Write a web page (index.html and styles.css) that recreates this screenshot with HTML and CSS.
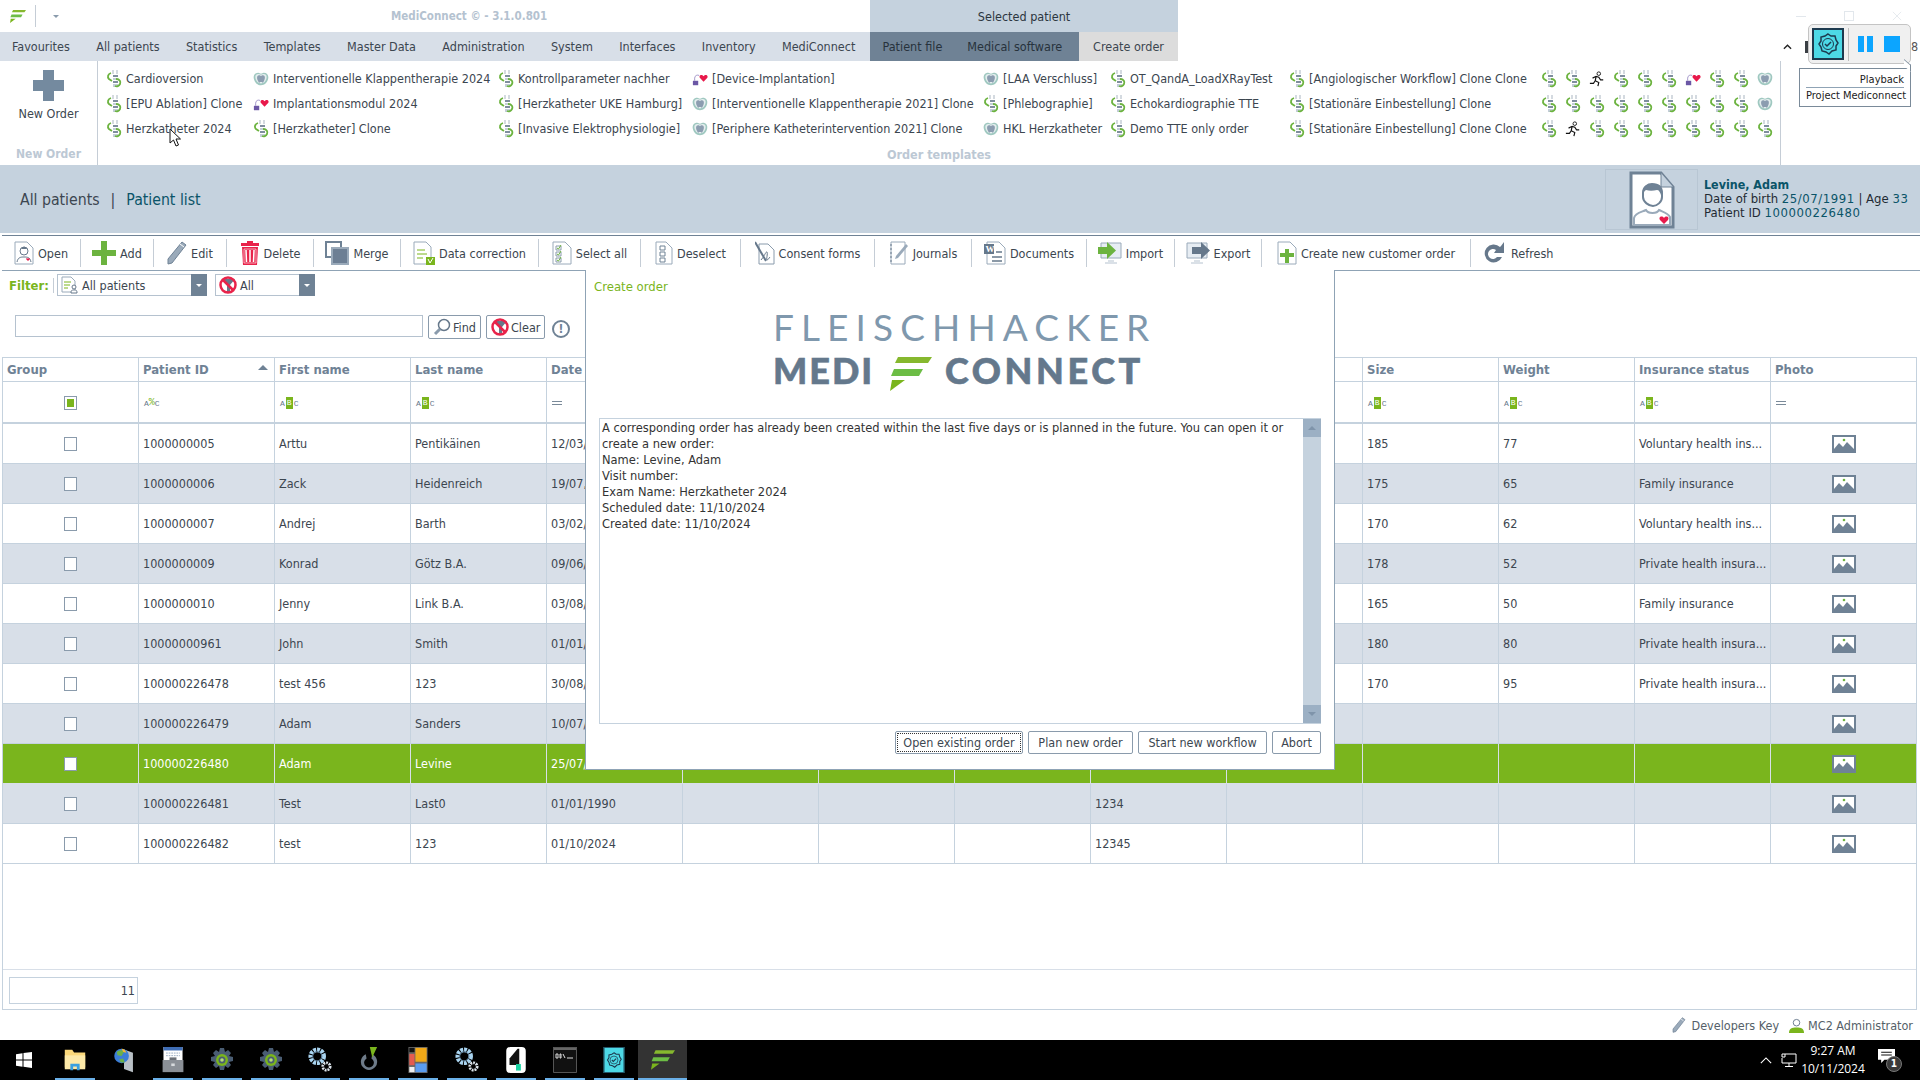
FILE: index.html
```html
<!DOCTYPE html>
<html lang="en">
<head>
<meta charset="utf-8">
<title>MediConnect</title>
<link rel="stylesheet" href="styles.css">
</head>
<body>
<svg class="sprite" xmlns="http://www.w3.org/2000/svg">
  <symbol id="flogo" viewBox="0 0 42 34"><path d="M8 0h34l-4 6H5z" fill="#86b82e"/><path d="M4 12h29l-4 7H1z" fill="#6cbd45"/><path d="M2 23h13L0 34z" fill="#7ab51d"/></symbol>
  <symbol id="dna" viewBox="0 0 16 18"><path d="M7 0v4M11 0v4" stroke="#a9b5c1" fill="none"/><path d="M7 5h5v2H7zM7 11h5v2H7z" fill="#7f8e9e"/><path d="M7 8h5v2H7zM7 14h5v3H7z" fill="#c3cdd8"/><path d="M5 3C2 4 1 7 3 9l3 2" stroke="#6cb33f" stroke-width="1.8" fill="none"/><path d="M10 9c4 0 5 3 4 5-1 2-3 3-5 2" stroke="#6cb33f" stroke-width="1.8" fill="none"/></symbol>
  <symbol id="lung" viewBox="0 0 18 16"><path d="M6 1C2 1 0 4 1 8s4 7 8 7 7-3 8-7-1-7-5-7c-1 0-2 1-3 1S7 1 6 1z" fill="#9fc8c0"/><path d="M5.500 2.500C3 3 2 5 3 8s3 5 6 5 5-2 6-5-0-5-2.500-5.500C11 2.500 10 3 9 3s-2-.5-3.500-.5z" fill="#e4eeee"/><path d="M6 4c2-.5 2 .5 3 .5S10 3.500 12 4s1.500 4 .5 6-1.500 3-2.500 1.500H8C7 13 6.500 12 5.500 10S4 4.500 6 4z" fill="#8c9db0"/></symbol>
  <symbol id="device" viewBox="0 0 18 16"><path d="M1 10h6v5H1z" fill="#6b57a5"/><path d="M3 10V7c0-3 3-4 5-3" stroke="#9a8cc4" fill="none"/><path d="M13 11L9 7c-2-3 2-5 4-2 2-3 6-1 4 2z" fill="#e8194b"/></symbol>
  <symbol id="run" viewBox="0 0 18 18"><circle cx="11" cy="3" r="2" fill="#fff" stroke="#111"/><path d="M4 8l4-2 3 1 2 3 3 0M8 6L7 11l4 2-1 4M7 11l-2 3-4 0" fill="none" stroke="#111" stroke-width="1.3"/></symbol>
  <symbol id="i-open" viewBox="0 0 20 24"><path d="M1 1h12l6 6v16H1z" fill="#fff" stroke="#9aaaba"/><circle cx="10" cy="10" r="4" fill="#fff" stroke="#66788b"/><path d="M7 8c2-3 5-3 6 0z" fill="#66788b"/><path d="M3 21c1-5 4-5 7-5s6 0 7 5" fill="none" stroke="#66788b"/><path d="M14 20l-2-2c0-1 2-1 2 0 0-1 2-1 2 0z" fill="#e8194b"/></symbol>
  <symbol id="i-add" viewBox="0 0 24 24"><path d="M9 0h6v9h9v6h-9v9H9v-9H0V9h9z" fill="#6cb33f"/></symbol>
  <symbol id="i-edit" viewBox="0 0 20 24"><path d="M15 1l4 3L5 22l-4 1 0-5z" fill="#9aaaba" stroke="#6f8295"/><path d="M13 3l4 3" stroke="#fff"/></symbol>
  <symbol id="i-del" viewBox="0 0 20 24"><path d="M7 0h6v2h6v3H1V2h6z" fill="#e8234a"/><path d="M2 6h16l-1 18H3z" fill="#e8234a"/><path d="M6 9l.5 12M10 9v12M14 9l-.5 12" stroke="#fff" stroke-width="1.5"/><path d="M4 8h12v14H4z" fill="none" stroke="#fff" stroke-width=".6"/></symbol>
  <symbol id="i-merge" viewBox="0 0 24 24"><path d="M1 1h15v15H1z" fill="#fff" stroke="#6f8295" stroke-width="2"/><path d="M7 7h16v16H7z" fill="#fff" stroke="#9aaaba" stroke-width="2"/><path d="M8 8h14v14H8z" fill="#5d7188" opacity=".9"/></symbol>
  <symbol id="i-data" viewBox="0 0 22 24"><path d="M1 1h12l5 5v17H1z" fill="#fff" stroke="#9aaaba"/><path d="M4 9h8M4 13h10M4 17h6" stroke="#7ab51d"/><path d="M13 16h9v8h-9z" fill="#7ab51d"/><path d="M15 18l2 4 3-5" stroke="#fff" fill="none"/></symbol>
  <symbol id="i-selall" viewBox="0 0 20 24"><path d="M1 1h12l6 6v16H1z" fill="#fff" stroke="#9aaaba"/><path d="M4 5h5v4H4zM4 11h5v4H4zM4 17h5v4H4z" fill="#fff" stroke="#8a9bac"/><path d="M5 7l1.500 1L9 4M5 13l1.500 1L9 10M5 19l1.500 1L9 16" stroke="#6cb33f" fill="none"/></symbol>
  <symbol id="i-desel" viewBox="0 0 18 24"><path d="M1 1h10l6 6v16H1z" fill="#fff" stroke="#9aaaba"/><path d="M5 5h5v4H5zM5 11h5v4H5zM5 17h5v4H5z" fill="#fff" stroke="#6f8295"/></symbol>
  <symbol id="i-cons" viewBox="0 0 20 24"><path d="M4 3h9l6 6v14H4z" fill="#fff" stroke="#8a9bac"/><path d="M0 1l11 19" stroke="#66788b" stroke-width="2"/><path d="M6 19c3-3 5-9 6-8s-1 8 0 8 2-2 3-3" fill="none" stroke="#66788b"/></symbol>
  <symbol id="i-jour" viewBox="0 0 20 24"><path d="M2 1h14v22H2z" fill="#fff" stroke="#9aaaba"/><path d="M1 4h2M1 8h2M1 12h2M1 16h2M1 20h2" stroke="#66788b"/><path d="M17 3l2 2-10 12-3 1 1-3z" fill="#9aaaba"/></symbol>
  <symbol id="i-docs" viewBox="0 0 22 24"><path d="M3 1h12l6 6v16H3z" fill="#fff" stroke="#9aaaba"/><path d="M0 3h10v10H0z" fill="#66788b"/><text x="1.500" y="11" class="w-glyph">W</text><path d="M12 11h6M8 16h10M8 20h10" stroke="#66788b" stroke-width="1.500"/></symbol>
  <symbol id="i-imp" viewBox="0 0 24 24"><path d="M3 2h20v15H3z" fill="#e7edf3" stroke="#9aaaba"/><path d="M10 20h6M7 22h12" stroke="#b5c2cf"/><path d="M0 6h9V1l9 8.500L9 18v-5H0z" fill="#6cb33f"/></symbol>
  <symbol id="i-exp" viewBox="0 0 24 24"><path d="M1 2h20v15H1z" fill="#e7edf3" stroke="#9aaaba"/><path d="M8 20h6M5 22h12" stroke="#b5c2cf"/><path d="M6 6h9V1l9 8.500L15 18v-5H6z" fill="#66788b"/></symbol>
  <symbol id="i-new" viewBox="0 0 20 24"><path d="M1 1h12l6 6v16H1z" fill="#fff" stroke="#9aaaba"/><path d="M8 8h4v4h5v4h-5v6H8v-6H3v-4h5z" fill="#6cb33f"/></symbol>
  <symbol id="i-ref" viewBox="0 0 24 24"><path d="M17 6a9 9 0 1 0 2 10h-5a5 5 0 1 1-1-7l-2 3h10V1l-3 4z" fill="#66788b"/></symbol>
  <symbol id="i-nofilter" viewBox="0 0 18 18"><path d="M3 3l13 0-5 6v6l-3 2V9z" fill="#66788b"/><circle cx="9" cy="9" r="7.500" fill="none" stroke="#e8234a" stroke-width="2.500"/><path d="M4 4l10 10" stroke="#e8234a" stroke-width="2.500"/></symbol>
  <symbol id="i-allp" viewBox="0 0 18 18"><path d="M1 1h9l4 4v11H1z" fill="#fff" stroke="#9aaaba"/><path d="M3 6h7M3 9h6M3 12h4" stroke="#7ab51d"/><circle cx="13" cy="11" r="2" fill="#fff" stroke="#66788b"/><path d="M10 17c0-3 1-3 3-3s3 0 3 3z" fill="#fff" stroke="#66788b"/></symbol>
  <symbol id="i-find" viewBox="0 0 18 18"><circle cx="11" cy="7" r="5.500" fill="#fff" stroke="#66788b" stroke-width="1.500"/><path d="M7 11l-5 5" stroke="#8a9bac" stroke-width="3"/></symbol>
  <symbol id="i-photo" viewBox="0 0 24 18"><path d="M0 0h24v18H0z" fill="#6f8295"/><path d="M2 2h20v12H2z" fill="#fff"/><path d="M2 14l5-6 4 4 4-5 7 7z" fill="#6f8295"/><circle cx="12" cy="5" r="1.300" fill="#6cb33f"/></symbol>
  <symbol id="gear" viewBox="0 0 24 24"><path d="M10 0h4l1 4 3-2 3 3-2 3 4 1v4l-4 1 2 3-3 3-3-2-1 4h-4l-1-4-3 2-3-3 2-3-4-1V9l4-1-2-3 3-3 3 2z" fill="#4a5d73"/><circle cx="12" cy="12" r="6" fill="#7ab51d"/><circle cx="12" cy="12" r="3.500" fill="#4a5d73"/><circle cx="12" cy="12" r="1.800" fill="#b8dc7a"/></symbol>
  <symbol id="gears" viewBox="0 0 26 28"><circle cx="10" cy="10" r="7" fill="none" stroke="#a9d4f0" stroke-width="5" stroke-dasharray="3 1"/><circle cx="10" cy="10" r="5" fill="none" stroke="#4b6a84" stroke-width="1"/><circle cx="20" cy="21" r="4" fill="none" stroke="#dfe7ee" stroke-width="3" stroke-dasharray="2 1"/></symbol>
  <symbol id="badge" viewBox="0 0 24 24"><path d="M12 2l3 2 4 0 1 4 2 3-2 3 0 4-4 1-3 3-3-2-4-1-1-4-2-3 2-3 0-4 4-1z" fill="none" stroke="currentColor" stroke-width="1.500"/><circle cx="12" cy="12" r="5.500" fill="none" stroke="currentColor"/><path d="M9 12l2 2 4-4" fill="none" stroke="currentColor" stroke-width="1.500"/></symbol>
  <symbol id="patient" viewBox="0 0 46 58"><path d="M2 2h30l12 14v40H2z" fill="#fff" stroke="#6f8295" stroke-width="3"/><path d="M32 2v14h12" fill="#c5d2de" stroke="#6f8295"/><path d="M14 22c0-6 5-9 9-9 6 0 10 3 10 9v4c0 5-5 9-9 9s-10-4-10-9z" fill="#fff" stroke="#6f8295" stroke-width="2"/><path d="M14 24c-2-8 4-11 9-11 7 0 11 4 9 11-1-3-2-5-4-5-4 1-8 1-11 0-2 1-3 3-3 5z" fill="#6f8295"/><path d="M5 54v-7c1-5 8-6 12-8 2 4 11 4 13 0 4 2 9 3 11 7v8z" fill="#fff" stroke="#9aaaba" stroke-width="2"/><path d="M35 53l-4-4c-2-3 2-5 4-2 2-3 6-1 4 2z" fill="#e8194b"/></symbol>
</svg>

<header class="titlebar">
  <div class="title-left">
    <svg class="app-logo"><use href="#flogo"/></svg>
    <span class="tb-sep"></span>
    <span class="tb-caret"></span>
    <span class="app-title">MediConnect © - 3.1.0.801</span>
  </div>
  <div class="selected-tab">Selected patient</div>
  <div class="win-ctrls">
    <span class="win-min"></span>
    <span class="win-max"></span>
    <svg class="win-close" viewBox="0 0 12 12"><path d="M1 1l10 10M11 1L1 11"/></svg>
  </div>
</header>

<nav class="menubar">
  <div class="menu-main">
    <span class="tab">Favourites</span><span class="tab">All patients</span><span class="tab">Statistics</span><span class="tab">Templates</span><span class="tab">Master Data</span><span class="tab">Administration</span><span class="tab">System</span><span class="tab">Interfaces</span><span class="tab">Inventory</span><span class="tab">MediConnect</span>
  </div>
  <div class="menu-ctx"><span class="tab">Patient file</span><span class="tab">Medical software</span></div>
  <div class="menu-order">Create order</div>
  <div class="menu-tail">
    <svg class="chev" viewBox="0 0 10 7"><path d="M1 6l4-4 4 4"/></svg>
    <i class="tail-ico"></i>
    <span class="tail-end">8</span>
  </div>
</nav>

<section class="ribbon">
  <div class="rib-new">
    <div class="big-add">
      <svg viewBox="0 0 31 31"><path d="M10 0h11v10h10v11H21v10H10V21H0V10h10z" fill="#748a9f"/></svg>
      <span>New Order</span>
    </div>
    <div class="rib-label">New Order</div>
  </div>
  <div class="rib-tpl">
    <div class="tpl-grid">
      <div class="tpl"><svg><use href="#dna"/></svg>Cardioversion</div>
      <div class="tpl"><svg><use href="#dna"/></svg>[EPU Ablation] Clone</div>
      <div class="tpl"><svg><use href="#dna"/></svg>Herzkatheter 2024</div>
      <div class="tpl"><svg><use href="#lung"/></svg>Interventionelle Klappentherapie 2024</div>
      <div class="tpl"><svg><use href="#device"/></svg>Implantationsmodul 2024</div>
      <div class="tpl"><svg><use href="#dna"/></svg>[Herzkatheter] Clone</div>
      <div class="tpl"><svg><use href="#dna"/></svg>Kontrollparameter nachher</div>
      <div class="tpl"><svg><use href="#dna"/></svg>[Herzkatheter UKE Hamburg]</div>
      <div class="tpl"><svg><use href="#dna"/></svg>[Invasive Elektrophysiologie]</div>
      <div class="tpl"><svg><use href="#device"/></svg>[Device-Implantation]</div>
      <div class="tpl"><svg><use href="#lung"/></svg>[Interventionelle Klappentherapie 2021] Clone</div>
      <div class="tpl"><svg><use href="#lung"/></svg>[Periphere Katheterintervention 2021] Clone</div>
      <div class="tpl"><svg><use href="#lung"/></svg>[LAA Verschluss]</div>
      <div class="tpl"><svg><use href="#dna"/></svg>[Phlebographie]</div>
      <div class="tpl"><svg><use href="#lung"/></svg>HKL Herzkatheter</div>
      <div class="tpl"><svg><use href="#dna"/></svg>OT_QandA_LoadXRayTest</div>
      <div class="tpl"><svg><use href="#dna"/></svg>Echokardiographie TTE</div>
      <div class="tpl"><svg><use href="#dna"/></svg>Demo TTE only order</div>
      <div class="tpl"><svg><use href="#dna"/></svg>[Angiologischer Workflow] Clone Clone</div>
      <div class="tpl"><svg><use href="#dna"/></svg>[Stationäre Einbestellung] Clone</div>
      <div class="tpl"><svg><use href="#dna"/></svg>[Stationäre Einbestellung] Clone Clone</div>
      <div class="tpl"><svg><use href="#dna"/></svg></div><div class="tpl"><svg><use href="#dna"/></svg></div><div class="tpl"><svg><use href="#dna"/></svg></div>
      <div class="tpl"><svg><use href="#dna"/></svg></div><div class="tpl"><svg><use href="#dna"/></svg></div><div class="tpl"><svg><use href="#run"/></svg></div>
      <div class="tpl"><svg><use href="#run"/></svg></div><div class="tpl"><svg><use href="#dna"/></svg></div><div class="tpl"><svg><use href="#dna"/></svg></div>
      <div class="tpl"><svg><use href="#dna"/></svg></div><div class="tpl"><svg><use href="#dna"/></svg></div><div class="tpl"><svg><use href="#dna"/></svg></div>
      <div class="tpl"><svg><use href="#dna"/></svg></div><div class="tpl"><svg><use href="#dna"/></svg></div><div class="tpl"><svg><use href="#dna"/></svg></div>
      <div class="tpl"><svg><use href="#dna"/></svg></div><div class="tpl"><svg><use href="#dna"/></svg></div><div class="tpl"><svg><use href="#dna"/></svg></div>
      <div class="tpl"><svg><use href="#device"/></svg></div><div class="tpl"><svg><use href="#dna"/></svg></div><div class="tpl"><svg><use href="#dna"/></svg></div>
      <div class="tpl"><svg><use href="#dna"/></svg></div><div class="tpl"><svg><use href="#dna"/></svg></div><div class="tpl"><svg><use href="#dna"/></svg></div>
      <div class="tpl"><svg><use href="#dna"/></svg></div><div class="tpl"><svg><use href="#dna"/></svg></div><div class="tpl"><svg><use href="#dna"/></svg></div>
      <div class="tpl"><svg><use href="#lung"/></svg></div><div class="tpl"><svg><use href="#lung"/></svg></div><div class="tpl"><svg><use href="#dna"/></svg></div>
    </div>
    <div class="rib-label rib-label-wide">Order templates</div>
  </div>
  <div class="rib-right"></div>
</section>

<section class="band">
  <div class="crumbs"><span>All patients</span><span class="crumb-sep">|</span><span class="crumb-cur">Patient list</span></div>
  <div class="pat-card">
    <div class="pat-pic"><svg><use href="#patient"/></svg></div>
    <div class="pat-info">
      <div class="pat-name">Levine, Adam</div>
      <div>Date of birth <b>25/07/1991</b> | Age <b>33</b></div>
      <div>Patient ID <b>100000226480</b></div>
    </div>
  </div>
</section>

<div class="toolbar">
  <div class="tool"><svg class="w20"><use href="#i-open"/></svg>Open</div>
  <div class="tool"><svg class="w24"><use href="#i-add"/></svg>Add</div>
  <div class="tool"><svg class="w20"><use href="#i-edit"/></svg>Edit</div>
  <div class="tool"><svg class="w20"><use href="#i-del"/></svg>Delete</div>
  <div class="tool"><svg class="w24"><use href="#i-merge"/></svg>Merge</div>
  <div class="tool"><svg class="w22"><use href="#i-data"/></svg>Data correction</div>
  <div class="tool"><svg class="w20"><use href="#i-selall"/></svg>Select all</div>
  <div class="tool"><svg class="w18"><use href="#i-desel"/></svg>Deselect</div>
  <div class="tool"><svg class="w20"><use href="#i-cons"/></svg>Consent forms</div>
  <div class="tool"><svg class="w20"><use href="#i-jour"/></svg>Journals</div>
  <div class="tool"><svg class="w22"><use href="#i-docs"/></svg>Documents</div>
  <div class="tool"><svg class="w24"><use href="#i-imp"/></svg>Import</div>
  <div class="tool"><svg class="w24"><use href="#i-exp"/></svg>Export</div>
  <div class="tool"><svg class="w20"><use href="#i-new"/></svg>Create new customer order</div>
  <div class="tool tool-last"><svg class="w24"><use href="#i-ref"/></svg>Refresh</div>
</div>

<main class="content">
  <div class="filter-row">
    <span class="filter-label">Filter:</span>
    <div class="combo combo-a"><svg><use href="#i-allp"/></svg><span>All patients</span><i class="combo-arrow"></i></div>
    <div class="combo combo-b"><svg><use href="#i-nofilter"/></svg><span>All</span><i class="combo-arrow"></i></div>
  </div>
  <div class="search-row">
    <div class="search-input"></div>
    <div class="btn btn-find"><svg><use href="#i-find"/></svg>Find</div>
    <div class="btn btn-clear"><svg><use href="#i-nofilter"/></svg>Clear</div>
    <div class="info-ico">!</div>
  </div>
  <div class="grid-box">
    <table class="grid">
      <thead>
        <tr><th>Group</th><th class="sorted">Patient ID<i class="sort"></i></th><th>First name</th><th>Last name</th><th>Date of birth</th><th></th><th></th><th></th><th></th><th></th><th>Size</th><th>Weight</th><th>Insurance status</th><th>Photo</th></tr>
        <tr class="flt">
          <td class="c"><span class="cb cb-on"></span></td>
          <td><span class="abc">A<b class="pct">%</b>C</span></td>
          <td><span class="abc">A<b>B</b>C</span></td>
          <td><span class="abc">A<b>B</b>C</span></td>
          <td><span class="eq"></span></td><td></td><td></td><td></td><td></td><td></td>
          <td><span class="abc">A<b>B</b>C</span></td>
          <td><span class="abc">A<b>B</b>C</span></td>
          <td><span class="abc">A<b>B</b>C</span></td>
          <td><span class="eq"></span></td>
        </tr>
      </thead>
      <tbody>
        <tr><td class="c"><span class="cb"></span></td><td>1000000005</td><td>Arttu</td><td>Pentikäinen</td><td>12/03/</td><td></td><td></td><td></td><td></td><td></td><td>185</td><td>77</td><td>Voluntary health ins...</td><td class="c"><svg class="ph"><use href="#i-photo"/></svg></td></tr>
        <tr><td class="c"><span class="cb"></span></td><td>1000000006</td><td>Zack</td><td>Heidenreich</td><td>19/07,</td><td></td><td></td><td></td><td></td><td></td><td>175</td><td>65</td><td>Family insurance</td><td class="c"><svg class="ph"><use href="#i-photo"/></svg></td></tr>
        <tr><td class="c"><span class="cb"></span></td><td>1000000007</td><td>Andrej</td><td>Barth</td><td>03/02/</td><td></td><td></td><td></td><td></td><td></td><td>170</td><td>62</td><td>Voluntary health ins...</td><td class="c"><svg class="ph"><use href="#i-photo"/></svg></td></tr>
        <tr><td class="c"><span class="cb"></span></td><td>1000000009</td><td>Konrad</td><td>Götz B.A.</td><td>09/06/</td><td></td><td></td><td></td><td></td><td></td><td>178</td><td>52</td><td>Private health insura...</td><td class="c"><svg class="ph"><use href="#i-photo"/></svg></td></tr>
        <tr><td class="c"><span class="cb"></span></td><td>1000000010</td><td>Jenny</td><td>Link B.A.</td><td>03/08/</td><td></td><td></td><td></td><td></td><td></td><td>165</td><td>50</td><td>Family insurance</td><td class="c"><svg class="ph"><use href="#i-photo"/></svg></td></tr>
        <tr><td class="c"><span class="cb"></span></td><td>10000000961</td><td>John</td><td>Smith</td><td>01/01/</td><td></td><td></td><td></td><td></td><td></td><td>180</td><td>80</td><td>Private health insura...</td><td class="c"><svg class="ph"><use href="#i-photo"/></svg></td></tr>
        <tr><td class="c"><span class="cb"></span></td><td>100000226478</td><td>test 456</td><td>123</td><td>30/08/</td><td></td><td></td><td></td><td></td><td></td><td>170</td><td>95</td><td>Private health insura...</td><td class="c"><svg class="ph"><use href="#i-photo"/></svg></td></tr>
        <tr><td class="c"><span class="cb"></span></td><td>100000226479</td><td>Adam</td><td>Sanders</td><td>10/07/</td><td></td><td></td><td></td><td></td><td></td><td></td><td></td><td></td><td class="c"><svg class="ph"><use href="#i-photo"/></svg></td></tr>
        <tr class="sel"><td class="c"><span class="cb"></span></td><td>100000226480</td><td>Adam</td><td>Levine</td><td>25/07/1991</td><td></td><td></td><td></td><td></td><td></td><td></td><td></td><td></td><td class="c"><svg class="ph"><use href="#i-photo"/></svg></td></tr>
        <tr><td class="c"><span class="cb"></span></td><td>100000226481</td><td>Test</td><td>Last0</td><td>01/01/1990</td><td></td><td></td><td></td><td>1234</td><td></td><td></td><td></td><td></td><td class="c"><svg class="ph"><use href="#i-photo"/></svg></td></tr>
        <tr><td class="c"><span class="cb"></span></td><td>100000226482</td><td>test</td><td>123</td><td>01/10/2024</td><td></td><td></td><td></td><td>12345</td><td></td><td></td><td></td><td></td><td class="c"><svg class="ph"><use href="#i-photo"/></svg></td></tr>
      </tbody>
    </table>
    <div class="grid-foot"><div class="count">11</div></div>
  </div>
</main>

<footer class="status">
  <svg class="st-pen"><use href="#i-edit"/></svg><span>Developers Key</span>
  <svg class="st-user" viewBox="0 0 16 16"><circle cx="8" cy="5" r="3.500" fill="#fff" stroke="#66788b"/><path d="M0 16c0-5 3-6 8-6s8 1 8 6z" fill="#7ab51d"/></svg><span>MC2 Administrator</span>
</footer>

<div class="taskbar">
  <div class="start"><svg viewBox="0 0 16 16"><path d="M0 2.300l6.500-1v6.200H0zM7.500 1.100L16 0v7.500H7.500zM0 8.500h6.500v6.200l-6.500-1zM7.500 8.500H16V16l-8.500-1.200z" fill="#fff"/></svg></div>
  <div class="tk tk-on"><svg viewBox="0 0 24 28"><path d="M1 3h8l2 3h12v16H1z" fill="#fbd87a"/><path d="M1 9h22v15H1z" fill="#fde9a8"/><path d="M7 18h10v7h-3v-4h-4v4H7z" fill="#3aa0e0"/></svg></div>
  <div class="tk"><svg viewBox="0 0 24 32"><path d="M12 3l11 4v24l-11-4z" fill="#b9c0c6"/><circle cx="9" cy="11" r="9" fill="#3b7dd8"/><path d="M3 6c3-2 7-3 9 0l-3 5-5-1zM6 15l5-1 2 5-5 0z" fill="#6bb04a"/><path d="M9 2c3 0 5 2 6 5l-4-1z" fill="#f2b632"/></svg></div>
  <div class="tk tk-on"><svg viewBox="0 0 24 30"><path d="M1 0h22v16H1z" fill="#fff"/><path d="M1 0h22v4H1z" fill="#3f6db5"/><path d="M4 7h16M4 10h16" stroke="#8fa3bb" stroke-dasharray="2 1"/><path d="M0 15h24v14H0z" fill="#8b9097"/><path d="M8 12h8v3H8z" fill="#6c7178"/><path d="M10 19h4v3h-4z" fill="#d8dbde"/></svg></div>
  <div class="tk tk-on"><svg><use href="#gear"/></svg></div>
  <div class="tk tk-on"><svg><use href="#gear"/></svg></div>
  <div class="tk tk-on"><svg><use href="#gears"/></svg></div>
  <div class="tk tk-on"><svg viewBox="0 0 24 32"><path d="M8 9a10 10 0 1 0 8 0l-1 5a6 6 0 1 1-6 0z" fill="#6e7b89"/><path d="M13 0h9l-6 13z" fill="#7ab51d"/></svg></div>
  <div class="tk tk-on"><svg viewBox="0 0 22 30"><path d="M0 0h22v30H0z" fill="#666"/><path d="M1 1h6v5H1z" fill="#111"/><path d="M8 1h13v16H8z" fill="#f0a818"/><path d="M1 8h6v13H1z" fill="#e35b4f"/><path d="M8 19h13v10H8z" fill="#5a9cf0"/><path d="M1 23h6v6H1z" fill="#eee"/></svg></div>
  <div class="tk tk-on"><svg><use href="#gears"/></svg></div>
  <div class="tk tk-on"><svg viewBox="0 0 24 32"><rect width="24" height="32" rx="5" fill="#fff"/><path d="M14 2L4 14v8h12V2z" fill="#111"/><path d="M12 21h6v8h-6z" fill="#19d3a2"/></svg></div>
  <div class="tk tk-on"><svg viewBox="0 0 24 26"><path d="M0 0h24v26H0z" fill="#111"/><path d="M0 0h24v3H0z" fill="#666"/><path d="M.5.500h23v25H.500z" fill="none" stroke="#555"/><path d="M3 7h2v4H3zM7 7h1v4H7zM10 7l2 4M14 11h6" stroke="#ddd" fill="none"/></svg></div>
  <div class="tk tk-on"><svg class="tk-badge" viewBox="0 0 24 30"><path d="M0 0h24v30H0z" fill="#4dd9e6"/><path d="M.500.500h23v29H.500z" fill="none" stroke="#1d3a4f"/><use href="#badge" x="2" y="5" width="20" height="20"/></svg></div>
  <div class="tk tk-on tk-active"><svg><use href="#flogo"/></svg></div>
  <div class="tray">
    <svg class="tr-chev" viewBox="0 0 14 8"><path d="M1 7l6-6 6 6"/></svg>
    <svg class="tr-net" viewBox="0 0 16 16"><path d="M4 2h11v9H1V6M8 11v3M4 14.500h8M1 2h3v3H1z"/></svg>
    <div class="clock"><div>9:27 AM</div><div>10/11/2024</div></div>
    <div class="notif"><svg viewBox="0 0 16 14"><path d="M0 0h16v10H6l-3 3v-3H0z" fill="#fff"/><path d="M3 3h10M3 5.500h10" stroke="#111"/></svg><span>1</span></div>
  </div>
</div>

<div class="modal">
  <div class="modal-title">Create order</div>
  <div class="logo">
    <div class="logo-top">FLEISCHHACKER</div>
    <div class="logo-bottom"><span class="logo-medi">MEDI</span><svg><use href="#flogo"/></svg><span class="logo-conn">CONNECT</span></div>
  </div>
  <div class="msg">
    <div class="msg-text">A corresponding order has already been created within the last five days or is planned in the future. You can open it or<br>create a new order:<br>Name: Levine, Adam<br>Visit number:<br>Exam Name: Herzkatheter 2024<br>Scheduled date: 11/10/2024<br>Created date: 11/10/2024</div>
    <div class="msg-scroll"><i class="sb-up"></i><i class="sb-down"></i></div>
  </div>
  <div class="modal-btns">
    <div class="mbtn mbtn-focus"><span>Open existing order</span></div>
    <div class="mbtn mbtn-plan">Plan new order</div>
    <div class="mbtn mbtn-start">Start new workflow</div>
    <div class="mbtn mbtn-abort">Abort</div>
  </div>
</div>

<div class="recorder">
  <div class="rec-badge"><svg><use href="#badge"/></svg></div>
  <i class="rec-sep"></i>
  <i class="rec-pause"></i><i class="rec-pause rec-pause2"></i><i class="rec-stop"></i>
</div>
<div class="rec-tip"><div class="tip-top">Playback</div><div>Project Mediconnect</div></div>

<svg class="cursor" viewBox="0 0 12 19"><path d="M1 1v14l3.500-3 2.500 6 2.500-1-2.500-6h4.500z" fill="#fff" stroke="#111"/></svg>
</body>
</html>
```
FILE: styles.css
```css
* { box-sizing: border-box; }
html, body { margin: 0; padding: 0; }
body {
  width: 1920px; height: 1080px; overflow: hidden; position: relative;
  display: flex; flex-direction: column; background: #fff; color: #3c4650;
  font-family: "DejaVu Sans Condensed", "DejaVu Sans", sans-serif; font-stretch: condensed; font-size: 12.5px;
}
.sprite { display: none; }
svg { display: block; flex: none; }
.w-glyph { font: bold 9px "Liberation Serif", serif; fill: #fff; }

.titlebar { height: 32px; display: flex; flex: none; }
.title-left { width: 870px; display: flex; align-items: center; position: relative; }
.app-logo { width: 16px; height: 13px; margin-left: 10px; }
.tb-sep { width: 1px; height: 22px; background: #c5cdd6; margin-left: 9px; }
.tb-caret { width: 0; height: 0; border: 3px solid transparent; border-top: 3px solid #8a9bac; margin: 3px 0 0 17px; }
.app-title { position: absolute; left: 391px; color: #b4c2d0; font-weight: bold; font-size: 11.5px; }
.selected-tab { width: 308px; background: #c5d2de; display: flex; align-items: center; justify-content: center; color: #2c3640; }
.win-ctrls { margin-left: auto; display: flex; align-items: center; width: 127px; padding-left: 3px; gap: 38px; }
.win-min { width: 10px; height: 1px; background: #e2e7ec; }
.win-max { width: 10px; height: 10px; border: 1px solid #e2e7ec; }
.win-close { width: 10px; height: 10px; stroke: #e2e7ec; fill: none; }

.menubar { height: 29px; display: flex; flex: none; background: #fff; }
.menu-main { width: 870px; background: #d8dfe8; display: flex; }
.tab { display: flex; align-items: center; padding: 0 13.2px; white-space: nowrap; }
.tab:first-child { padding-left: 12px; }
.menu-ctx { width: 209px; background: #6f8295; display: flex; color: #27323c; }
.menu-ctx .tab { padding: 0 12.5px; }
.menu-order { width: 99px; background: #dcdcdc; display: flex; align-items: center; justify-content: center; }
.menu-tail { margin-left: auto; width: 139px; display: flex; align-items: center; }
.chev { width: 9px; height: 7px; fill: none; stroke: #222; stroke-width: 1.5; margin-left: 2px; }
.tail-ico { width: 6px; height: 12px; background: #3a3f44; margin-left: 13px; }
.tail-end { margin-left: auto; padding-right: 1px; color: #555; width: 9px; }

.ribbon { height: 104px; display: flex; flex: none; }
.rib-new { width: 98px; border-right: 1px solid #c5cdd6; display: flex; flex-direction: column; }
.big-add { flex: 1; display: flex; flex-direction: column; align-items: center; padding-top: 9px; gap: 5px; }
.big-add svg { width: 31px; height: 31px; }
.rib-label { height: 21px; text-align: center; color: #bcc8d4; font-weight: bold; font-size: 12px; line-height: 21px; }
.rib-label-wide { font-size: 12.5px; }
.rib-tpl { width: 1683px; display: flex; flex-direction: column; border-right: 1px solid #c5cdd6; }
.tpl-grid {
  flex: 1; padding: 5px 0 0 8px; display: grid;
  grid-template-rows: repeat(3, 25px); grid-auto-flow: column;
  grid-template-columns: 147px 245px 194px 291px 127px 179px 252px repeat(10, 24px);
  align-content: start;
}
.tpl { display: flex; align-items: center; gap: 4px; white-space: nowrap; color: #3c4650; }
.tpl svg { width: 16px; height: 18px; }

.band { height: 68px; flex: none; background: #c5d2de; display: flex; justify-content: space-between; }
.crumbs { display: flex; align-items: center; padding-left: 20px; font-size: 15.7px; gap: 11px; }
.crumb-cur { color: #0a5468; }
.pat-card { display: flex; padding: 4px 8px 3px 0; gap: 6px; }
.pat-pic { width: 93px; border: 1px solid #b8c6d3; display: flex; align-items: center; justify-content: center; }
.pat-pic svg { width: 46px; height: 58px; }
.pat-info { line-height: 14px; padding-top: 9px; color: #1f2a33; font-size: 13px; white-space: nowrap; width: 208px; }
.pat-info b { color: #0a5468; font-weight: normal; letter-spacing: .55px; }
.pat-name { color: #0a5468; font-weight: bold; font-size: 12.4px; }

.toolbar {
  height: 36px; flex: none; margin: 2px 0 0 2px; display: grid;
  border-top: 1px solid #6f8295; border-bottom: 1px solid #8fa3b5;
  grid-template-columns: 79px 73px 73px 87px 87px 138px 102px 100px 134px 97px 115px 88px 87px 209px 1fr;
  padding: 3px 0;
}
.tool { display: flex; align-items: center; justify-content: center; gap: 4px; border-right: 1px solid #c5cdd6; white-space: nowrap; }
.tool-last { border-right: 0; justify-content: flex-start; padding-left: 12px; }
.tool svg { height: 24px; }
.w18 { width: 18px; } .w20 { width: 20px; } .w22 { width: 22px; } .w24 { width: 24px; }

.content { flex: 1; display: flex; flex-direction: column; min-height: 0; }
.filter-row { display: flex; align-items: center; height: 22px; margin-top: 3px; }
.filter-label { color: #7ab51d; font-weight: bold; width: 57px; padding-left: 9px; font-size: 13px; background: linear-gradient(#c5cdd6, #c5cdd6) no-repeat 53px 50% / 1px 18px; }
.combo { height: 22px; border: 1px solid #b5c2cf; display: flex; align-items: center; gap: 3px; position: relative; padding-left: 3px; }
.combo svg { width: 18px; height: 18px; }
.combo-a { width: 150px; }
.combo-b { width: 100px; margin-left: 8px; }
.combo-arrow { position: absolute; right: -1px; top: -1px; width: 16px; height: 22px; background: #6f8295; }
.combo-arrow::after { content: ""; position: absolute; left: 5px; top: 10px; border: 3px solid transparent; border-top-color: #fff; }
.search-row { display: flex; align-items: flex-start; height: 24px; margin-top: 19px; padding-left: 15px; }
.search-input { width: 408px; height: 22px; border: 1px solid #b5c2cf; }
.btn { height: 24px; border: 1px solid #8a9bac; border-radius: 2px; display: flex; align-items: center; gap: 2px; padding-left: 4px; }
.btn svg { width: 18px; height: 18px; }
.btn-find { width: 53px; margin-left: 5px; }
.btn-clear { width: 59px; margin-left: 5px; }
.info-ico { width: 18px; height: 18px; margin: 5px 0 0 7px; border: 2px solid #6f8295; border-radius: 50%; color: #6f8295; font-weight: bold; font-size: 12px; line-height: 14px; text-align: center; }

.grid-box { margin: 18px 0 0 2px; width: 1915px; height: 653px; border: 1px solid #c5d2de; display: flex; flex-direction: column; }
.grid { border-collapse: separate; border-spacing: 0; table-layout: fixed; width: 1913px; }
.grid th, .grid td { width: 136px; border-right: 1px solid #c5d2de; border-bottom: 1px solid #c5d2de; padding: 0 4px; text-align: left; white-space: nowrap; overflow: hidden; }
.grid th:last-child, .grid td:last-child { width: auto; border-right: 0; }
.grid th { height: 24px; color: #6f8295; font-weight: bold; font-size: 13px; position: relative; }
.grid .flt td { height: 42px; border-bottom-width: 2px; padding-left: 5px; }
.grid tbody td { height: 40px; }
.grid tbody tr:nth-child(even) td { background: #d8dfe8; }
.grid tbody tr.sel td { background: #7ab51d; color: #fff; border-color: #d8dfe8; }
.sort { position: absolute; right: 6px; top: 7px; border: 4px solid transparent; border-top: 0; border-bottom: 5px solid #6f8295; border-left-width: 5px; border-right-width: 5px; }
.grid td.c { text-align: center; padding: 0; }
.cb { display: inline-block; width: 13px; height: 14px; border: 1px solid #8a9bac; background: #fff; vertical-align: middle; }
.cb-on { box-shadow: inset 0 0 0 2px #fff; background: #7ab51d; }
.abc { display: inline-flex; align-items: center; font: 8px "Liberation Mono", monospace; color: #66788b; vertical-align: middle; }
.abc b { background: #7ab51d; color: #fff; padding: 2px 1px; margin: 0 1px; font-weight: normal; line-height: 8px; }
.abc b.pct { background: none; color: #7ab51d; font-size: 10px; padding: 0; margin: 0; }
.eq { display: inline-block; width: 10px; height: 4px; border-top: 1px solid #7a8a99; border-bottom: 1px solid #7a8a99; vertical-align: middle; }
.ph { width: 24px; height: 18px; display: inline-block; vertical-align: middle; }
.grid-foot { margin-top: auto; height: 40px; border-top: 1px solid #d8dfe8; padding: 7px 0 0 6px; }
.count { width: 129px; height: 27px; border: 1px solid #c5d2de; text-align: right; line-height: 25px; padding-right: 2px; }

.status { height: 30px; flex: none; display: flex; align-items: center; justify-content: flex-end; padding-right: 7px; color: #555f69; }
.st-pen { width: 14px; height: 16px; margin-right: 5px; }
.st-user { width: 15px; height: 15px; margin: 0 4px 0 10px; }

.taskbar { height: 40px; flex: none; background: #000; display: flex; color: #fff; }
.start { width: 50px; display: flex; align-items: center; justify-content: center; padding-right: 2px; }
.start svg { width: 16px; height: 16px; }
.tk { width: 49px; position: relative; display: flex; align-items: center; justify-content: center; }
.tk svg { width: 24px; height: 26px; }
.tk-on::after { content: ""; position: absolute; left: 5px; right: 4px; bottom: 0; height: 2px; background: #6ab0e8; }
.tk-active { background: #333; }
.tk-active::after { left: 0; right: 0; }
.tk-badge { color: #1d3a4f; }
.tray { margin-left: auto; width: 162px; border-right: 5px solid #000; display: flex; align-items: center; position: relative; }
.tr-chev { width: 12px; height: 7px; fill: none; stroke: #fff; stroke-width: 1.3; margin-left: 2px; }
.tr-net { width: 16px; height: 16px; fill: none; stroke: #fff; margin-left: 9px; }
.clock { width: 72px; text-align: center; line-height: 18px; font-size: 12px; font-family: "Open Sans", sans-serif; font-stretch: 100%; }
.notif { position: relative; width: 24px; height: 24px; margin-left: 9px; }
.notif svg { width: 17px; height: 15px; position: absolute; left: 0; top: 1px; }
.notif span { position: absolute; right: 0; bottom: 0; width: 16px; height: 16px; border-radius: 50%; background: #3a3a3a; border: 1px solid #777; font-size: 10px; line-height: 14px; text-align: center; font-weight: bold; }

.modal { position: absolute; left: 585px; top: 270px; width: 750px; height: 500px; background: #fff; border: 1px solid #8fa3b5; border-top: 0; padding: 0 13px; display: flex; flex-direction: column; }
.modal-title { height: 30px; color: #7ab51d; padding-top: 9px; margin-left: -5px; font-size: 13px; }
.logo { height: 118px; padding: 13px 0 0 174px; }
.logo-top { font: 400 37px/27px Lato, sans-serif; color: #7f98ad; letter-spacing: 7.1px; height: 27px; white-space: nowrap; }
.logo-bottom { display: flex; font: 900 36px/26px Lato, sans-serif; color: #64788c; margin-top: 17px; height: 34px; -webkit-text-stroke: .6px #64788c; }
.logo-medi { width: 99px; letter-spacing: 2px; }
.logo-bottom svg { width: 42px; height: 34px; margin: 0 13px 0 18px; }
.logo-conn { letter-spacing: 3.6px; white-space: nowrap; }
.msg { height: 306px; border: 1px solid #c5d2de; border-right: 0; display: flex; }
.msg-text { flex: 1; padding: 1px 0 0 2px; line-height: 16px; font-size: 12.75px; color: #333; white-space: nowrap; }
.msg-scroll { width: 18px; background: #c5d2de; display: flex; flex-direction: column; justify-content: space-between; }
.msg-scroll i { height: 18px; background: #9cb0c4; position: relative; }
.msg-scroll i::after { content: ""; position: absolute; left: 5px; border: 4px solid transparent; }
.sb-up::after { top: 3px; border-bottom-color: #7f94aa !important; }
.sb-down::after { top: 7px; border-top-color: #7f94aa !important; }
.modal-btns { display: flex; margin-top: 7px; justify-content: flex-end; }
.mbtn { height: 23px; border: 1px solid #8a9bac; border-radius: 2px; display: flex; align-items: center; justify-content: center; white-space: nowrap; }
.mbtn-focus { width: 128px; padding: 1px; }
.mbtn-focus span { width: 100%; height: 100%; border: 1px dotted #333; display: flex; align-items: center; justify-content: center; }
.mbtn-plan { width: 105px; margin-left: 5px; }
.mbtn-start { width: 129px; margin-left: 5px; }
.mbtn-abort { width: 49px; margin-left: 5px; }

.recorder { position: absolute; left: 1808px; top: 24px; width: 103px; height: 40px; background: #f0f0f0; border: 1px solid #c4c4c4; border-radius: 5px; }
.rec-badge { position: absolute; left: 3px; top: 3px; width: 32px; height: 32px; background: #4dd9e6; border: 2px solid #1d3a4f; color: #1d3a4f; display: flex; align-items: center; justify-content: center; }
.rec-badge svg { width: 24px; height: 24px; }
.rec-sep { position: absolute; left: 39px; top: 3px; width: 1px; height: 33px; background: #bdbdbd; }
.rec-pause { position: absolute; left: 49px; top: 11px; width: 6px; height: 16px; background: #0ca5ff; }
.rec-pause2 { left: 58px; }
.rec-stop { position: absolute; left: 75px; top: 11px; width: 16px; height: 16px; background: #0ca5ff; }
.rec-tip { position: absolute; left: 1799px; top: 68px; width: 112px; height: 39px; background: #fff; border: 1px solid #7a8a99; color: #222; padding: 3px 6px; line-height: 15px; white-space: nowrap; font-size: 11px; }
.tip-top { text-align: right; border-bottom: 1px solid #8fa3b5; }
.rec-tip::before { content: ""; position: absolute; right: -1px; top: -7px; width: 6px; height: 6px; background: #fff; border-right: 1px solid #7a8a99; border-top: 1px solid #7a8a99; transform: skewY(40deg); }

.cursor { position: absolute; left: 169px; top: 128px; width: 12px; height: 19px; }
```
